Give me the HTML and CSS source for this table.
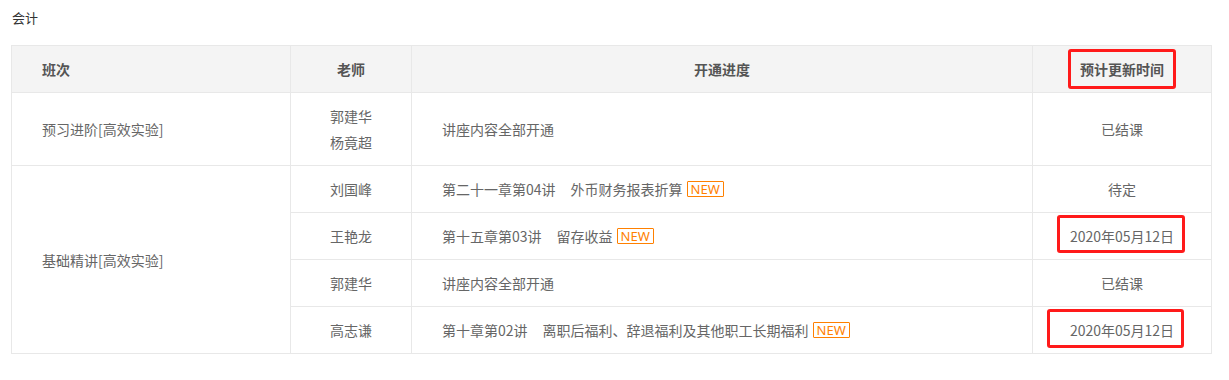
FILE: index.html
```html
<!DOCTYPE html>
<html lang="zh">
<head>
<meta charset="utf-8">
<link rel="stylesheet" href="styles.css">
</head>
<body>
<div class="page">
  <div class="title">会计</div>
  <table class="plan">
    <colgroup>
      <col class="c1"><col class="c2"><col class="c3"><col class="c4">
    </colgroup>
    <thead>
      <tr>
        <th class="left">班次</th>
        <th>老师</th>
        <th>开通进度</th>
        <th><span class="mark mark-head"></span>预计更新时间</th>
      </tr>
    </thead>
    <tbody>
      <tr>
        <td class="left">预习进阶[高效实验]</td>
        <td>郭建华<br>杨竟超</td>
        <td class="left">讲座内容全部开通</td>
        <td>已结课</td>
      </tr>
      <tr>
        <td class="left" rowspan="4">基础精讲[高效实验]</td>
        <td>刘国峰</td>
        <td class="left">第二十一章第04讲<span class="gap"></span>外币财务报表折算<span class="new">NEW</span></td>
        <td>待定</td>
      </tr>
      <tr>
        <td>王艳龙</td>
        <td class="left">第十五章第03讲<span class="gap"></span>留存收益<span class="new">NEW</span></td>
        <td><span class="mark mark-d1"></span>2020年05月12日</td>
      </tr>
      <tr>
        <td>郭建华</td>
        <td class="left">讲座内容全部开通</td>
        <td>已结课</td>
      </tr>
      <tr>
        <td>高志谦</td>
        <td class="left">第十章第02讲<span class="gap"></span>离职后福利、辞退福利及其他职工长期福利<span class="new">NEW</span></td>
        <td><span class="mark mark-d2"></span>2020年05月12日</td>
      </tr>
    </tbody>
  </table>
</div>
</body>
</html>
```

FILE: styles.css
```css
html, body {
  margin: 0;
  padding: 0;
  background: #fff;
}
body {
  font-family: "Noto Sans CJK SC", "Noto Sans", sans-serif;
  color: #666;
}
.page {
  padding: 8px 11px 0 11px;
}
.title {
  font-size: 13px;
  line-height: 20px;
  color: #333;
  padding-left: 1px;
  margin-bottom: 17px;
}
.plan {
  border-collapse: collapse;
  table-layout: fixed;
  width: 1200px;
  font-size: 14px;
}
.c1 { width: 279px; }
.c2 { width: 121px; }
.c3 { width: 621px; }
.c4 { width: 179px; }
.plan th, .plan td {
  border: 1px solid #e8e8e8;
  padding: 10px 0;
  line-height: 26px;
  text-align: center;
  vertical-align: middle;
  position: relative;
}
.plan th {
  background: #f4f4f4;
  color: #555;
  font-weight: bold;
}
.plan .left {
  text-align: left;
  padding-left: 30px;
}
.gap {
  display: inline-block;
  width: 15px;
}
.new {
  display: inline-block;
  margin-left: 4px;
  border: 1px solid #ff8000;
  color: #ff8000;
  font-size: 13px;
  line-height: 14px;
  padding: 0 3px;
  border-radius: 1px;
  font-family: "Noto Sans", sans-serif;
  vertical-align: 1px;
}
.mark {
  position: absolute;
  border: 3px solid #ff1a1a;
  border-radius: 3px;
  box-sizing: border-box;
}
.mark-head {
  left: 35px;
  top: 3px;
  width: 108px;
  height: 40px;
}
.mark-d1 {
  left: 24px;
  top: 2px;
  width: 128px;
  height: 38px;
}
.mark-d2 {
  left: 14px;
  top: 2px;
  width: 137px;
  height: 39px;
}
```
